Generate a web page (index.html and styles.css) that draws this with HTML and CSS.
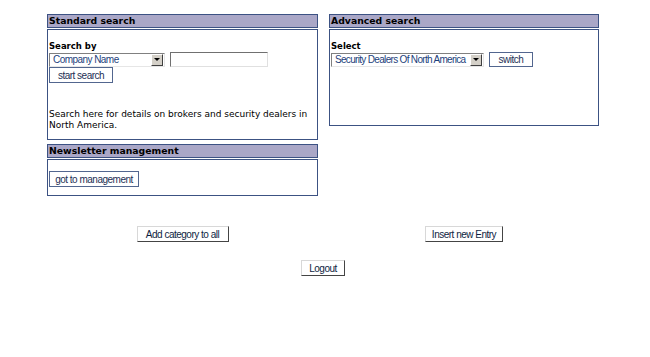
FILE: index.html
```html
<!DOCTYPE html>
<html lang="en">
<head>
    <meta charset="UTF-8">
    <title>Broker Search</title>
    <link rel="stylesheet" href="styles.css">
</head>
<body>
    <div class="page">
        <div class="columns">
            <div class="col">
                <div class="panel">
                    <div class="panel-head">Standard search</div>
                    <div class="panel-body search-body">
                        <label class="field-label" for="searchBy">Search by</label>
                        <div class="field-row">
                            <div class="combo combo-left">
                                <select id="searchBy"><option>Company Name</option></select>
                                <span class="combo-arrow"></span>
                            </div>
                            <input type="text" class="text-input">
                        </div>
                        <button class="btn btn-blue btn-start">start search</button>
                        <p class="info">Search here for details on brokers and security dealers in North America.</p>
                    </div>
                </div>
                <div class="panel">
                    <div class="panel-head">Newsletter management</div>
                    <div class="panel-body news-body">
                        <button class="btn btn-blue btn-news">got to management</button>
                    </div>
                </div>
            </div>
            <div class="col">
                <div class="panel">
                    <div class="panel-head">Advanced search</div>
                    <div class="panel-body adv-body">
                        <label class="field-label" for="category">Select</label>
                        <div class="field-row">
                            <div class="combo combo-right">
                                <select id="category"><option>Security Dealers Of North America</option></select>
                                <span class="combo-arrow"></span>
                            </div>
                            <button class="btn btn-blue btn-switch">switch</button>
                        </div>
                    </div>
                </div>
            </div>
        </div>

        <div class="actions">
            <div class="action-cell"><button class="btn btn-plain btn-add">Add category to all</button></div>
            <div class="action-cell"><button class="btn btn-plain btn-insert">Insert new Entry</button></div>
        </div>
        <div class="logout-row">
            <button class="btn btn-plain btn-logout">Logout</button>
        </div>
    </div>
</body>
</html>
```

FILE: styles.css
```css
body {
    margin: 8px;
    background-color: #ffffff;
    font-family: "DejaVu Sans", Verdana, sans-serif;
    font-size: 10px;
    color: #000;
}
.page {
    margin: 6px 0 0 39px;
    width: 552px;
}
.columns {
    display: flex;
    gap: 11px;
    align-items: flex-start;
}
.col {
    display: flex;
    flex-direction: column;
    gap: 4px;
}
.col:first-child {
    width: 271px;
}
.col:last-child {
    width: 270px;
}
.panel {
    display: flex;
    flex-direction: column;
    gap: 1px;
}
.panel-head {
    height: 12px;
    line-height: 12px;
    border: 1px solid #3c5283;
    background-color: #aaa7c7;
    font-weight: bold;
    font-size: 9.3px;
    padding-left: 1px;
    color: #000;
}
.panel-body {
    border: 1px solid #3c5283;
    padding: 0 1px;
    box-sizing: border-box;
}
.search-body {
    height: 111px;
    padding-top: 10px;
}
.adv-body {
    height: 97px;
    padding-top: 10px;
}
.news-body {
    height: 37px;
    padding-top: 11px;
}
.field-label {
    display: block;
    font-weight: bold;
    font-size: 8.5px;
    line-height: 12px;
}
.field-row {
    display: flex;
    align-items: center;
    gap: 5px;
}
.combo {
    display: flex;
    align-items: center;
    height: 14px;
    border-top: 1px solid #808080;
    border-left: 1px solid #808080;
    border-bottom: 1px solid #e6e6e6;
    border-right: 1px solid #e6e6e6;
    box-sizing: border-box;
    background: #fff;
}
.combo-left {
    width: 116px;
}
.combo-right {
    width: 153px;
}
.combo select {
    flex: 1;
    min-width: 0;
    appearance: none;
    -webkit-appearance: none;
    border: none;
    background: transparent;
    font-family: "Liberation Sans", Arial, sans-serif;
    font-size: 10px;
    letter-spacing: -0.55px;
    color: #1d3f7c;
    padding: 0 0 0 3px;
    height: 12px;
    line-height: 12px;
    outline: none;
}
.combo-right select {
    letter-spacing: -0.68px;
}
.combo-arrow {
    width: 10px;
    height: 10px;
    margin-right: 1px;
    background: #d4d0c8;
    border: 1px solid #fff;
    border-right-color: #404040;
    border-bottom-color: #404040;
    display: flex;
    align-items: center;
    justify-content: center;
}
.combo-arrow::after {
    content: "";
    border-left: 3px solid transparent;
    border-right: 3px solid transparent;
    border-top: 3px solid #000;
}
.text-input {
    width: 98px;
    height: 15px;
    box-sizing: border-box;
    border-top: 1px solid #707070;
    border-left: 1px solid #707070;
    border-bottom: 1px solid #e0e0e0;
    border-right: 1px solid #e0e0e0;
    padding: 0;
    background: #fff;
}
.btn {
    font-family: "Liberation Sans", Arial, sans-serif;
    font-size: 10px;
    letter-spacing: -0.5px;
    background: #fff;
    color: #1d2f55;
    height: 16px;
    line-height: 13px;
    padding: 0;
    box-sizing: border-box;
    white-space: nowrap;
    cursor: pointer;
}
.btn-blue {
    border: 1px solid #52668f;
}
.btn-start {
    width: 64px;
}
.btn-news {
    width: 90px;
}
.btn-switch {
    width: 44px;
    height: 15px;
}
.info {
    margin: 26px 0 0 0;
    font-size: 9px;
    line-height: 11px;
}
.btn-plain {
    border: 1px solid #d8d8d8;
    border-right-color: #444;
    border-bottom-color: #444;
    color: #0e1e42;
}
.btn-add {
    width: 92px;
}
.btn-insert {
    width: 78px;
}
.btn-logout {
    width: 44px;
}
.actions {
    display: grid;
    grid-template-columns: 271px 270px;
    column-gap: 11px;
    margin-top: 30px;
}
.action-cell {
    display: flex;
    justify-content: center;
}
.logout-row {
    display: flex;
    justify-content: center;
    margin-top: 18px;
}
```
